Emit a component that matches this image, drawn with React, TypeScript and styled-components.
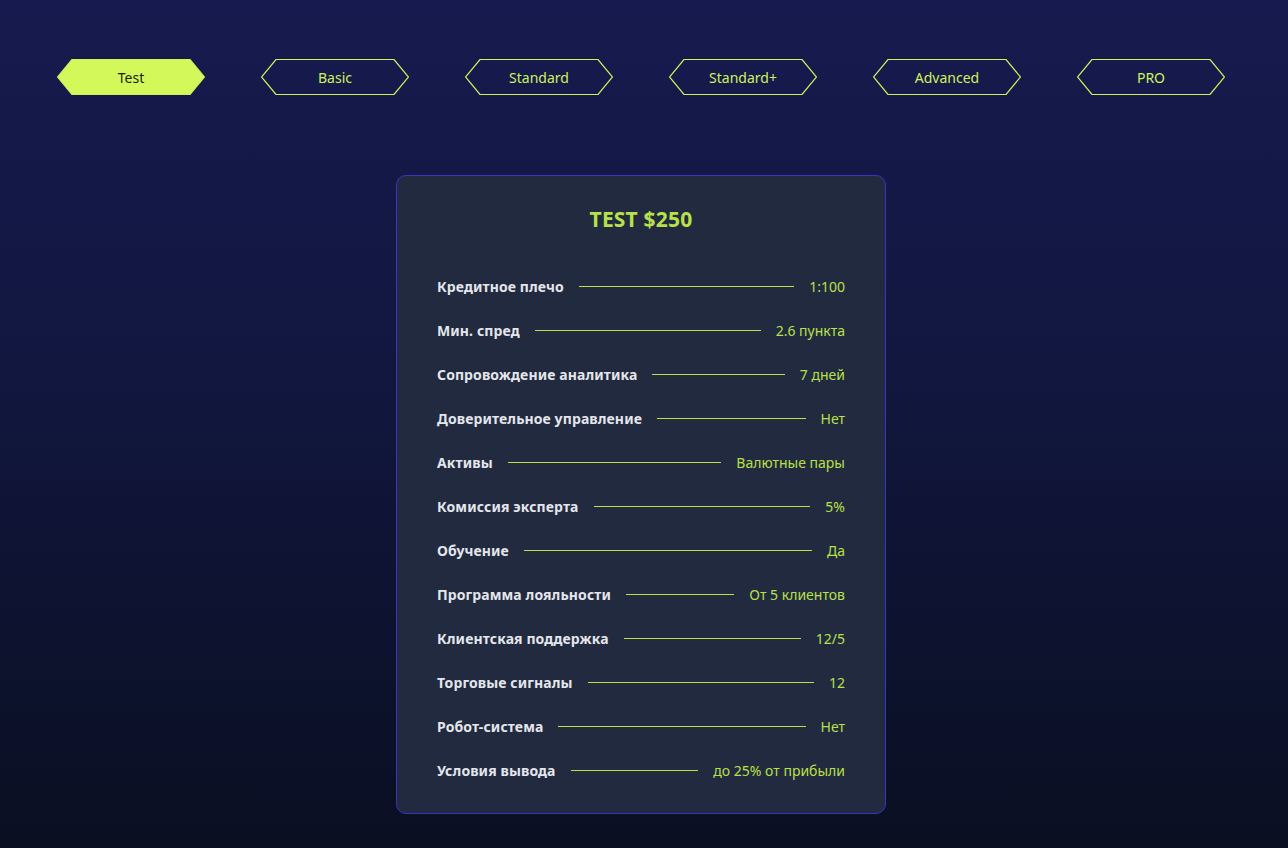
import { useState } from "react";
import styled, { createGlobalStyle } from "styled-components";

type Plan = {
  name: string;
  title: string;
  rows: [string, string][];
};

const rowsTest: [string, string][] = [
  ["Кредитное плечо", "1:100"],
  ["Мин. спред", "2.6 пункта"],
  ["Сопровождение аналитика", "7 дней"],
  ["Доверительное управление", "Нет"],
  ["Активы", "Валютные пары"],
  ["Комиссия эксперта", "5%"],
  ["Обучение", "Да"],
  ["Программа лояльности", "От 5 клиентов"],
  ["Клиентская поддержка", "12/5"],
  ["Торговые сигналы", "12"],
  ["Робот-система", "Нет"],
  ["Условия вывода", "до 25% от прибыли"],
];

const plans: Plan[] = [
  { name: "Test", title: "TEST $250", rows: rowsTest },
  { name: "Basic", title: "BASIC", rows: rowsTest },
  { name: "Standard", title: "STANDARD", rows: rowsTest },
  { name: "Standard+", title: "STANDARD+", rows: rowsTest },
  { name: "Advanced", title: "ADVANCED", rows: rowsTest },
  { name: "PRO", title: "PRO", rows: rowsTest },
];

const GlobalStyle = createGlobalStyle`
  html, body {
    margin: 0;
    padding: 0;
  }
  body {
    font-family: "Noto Sans", "Open Sans", sans-serif;
    background: #0a0f22;
  }
`;

export default function App() {
  const [active, setActive] = useState(0);
  const plan = plans[active];

  return (
    <Page>
      <GlobalStyle />
      <Tabs>
        {plans.map((p, i) => (
          <Tab key={p.name} $active={i === active} onClick={() => setActive(i)}>
            <TabShape viewBox="0 0 148 36" preserveAspectRatio="none">
              <polygon points="15,0.5 133,0.5 147.5,18 133,35.5 15,35.5 0.5,18" />
            </TabShape>
            <TabLabel>{p.name}</TabLabel>
          </Tab>
        ))}
      </Tabs>

      <Card>
        <Title>{plan.title}</Title>
        <List>
          {plan.rows.map(([label, value]) => (
            <Row key={label}>
              <Label>{label}</Label>
              <Line />
              <Value>{value}</Value>
            </Row>
          ))}
        </List>
      </Card>
    </Page>
  );
}

const Page = styled.div`
  min-height: 848px;
  box-sizing: border-box;
  padding: 59px 6px 0 0;
  background: linear-gradient(180deg, #171a4e 0%, #121741 40%, #0a0f22 100%);
  display: flex;
  flex-direction: column;
  align-items: center;
`;

const Tabs = styled.div`
  display: flex;
  gap: 56px;
`;

const Tab = styled.button<{ $active: boolean }>`
  position: relative;
  width: 148px;
  height: 36px;
  padding: 0;
  border: none;
  background: none;
  cursor: pointer;
  display: flex;
  align-items: center;
  justify-content: center;
  color: ${(p) => (p.$active ? "#1b1d1a" : "#cdf25a")};

  svg polygon {
    fill: ${(p) => (p.$active ? "#d3f85a" : "transparent")};
    stroke: #cdf25a;
    stroke-width: 1.2;
  }
`;

const TabShape = styled.svg`
  position: absolute;
  inset: 0;
  width: 100%;
  height: 100%;
`;

const TabLabel = styled.span`
  position: relative;
  font-family: "Noto Sans", sans-serif;
  font-size: 14px;
  font-weight: 400;
`;

const Card = styled.div`
  margin-top: 80px;
  width: 490px;
  box-sizing: border-box;
  border: 1px solid #3a33c4;
  border-radius: 10px;
  background: #212a3e;
  padding: 29px 40px 32px;
`;

const Title = styled.h2`
  margin: 0;
  text-align: center;
  font-size: 21px;
  font-weight: 700;
  letter-spacing: 0.2px;
  color: #b8e04a;
  line-height: 28px;
`;

const List = styled.div`
  margin-top: 43px;
  display: flex;
  flex-direction: column;
  gap: 23px;
`;

const Row = styled.div`
  display: flex;
  align-items: center;
  height: 21px;
`;

const Label = styled.span`
  font-size: 14px;
  font-weight: 700;
  letter-spacing: 0.1px;
  color: #e4e6ec;
  white-space: nowrap;
`;

const Line = styled.span`
  flex: 1;
  height: 0;
  border-top: 1px solid #b8e04a;
  margin: 0 15px;
`;

const Value = styled.span`
  font-size: 14px;
  color: #b8e04a;
  white-space: nowrap;
`;
